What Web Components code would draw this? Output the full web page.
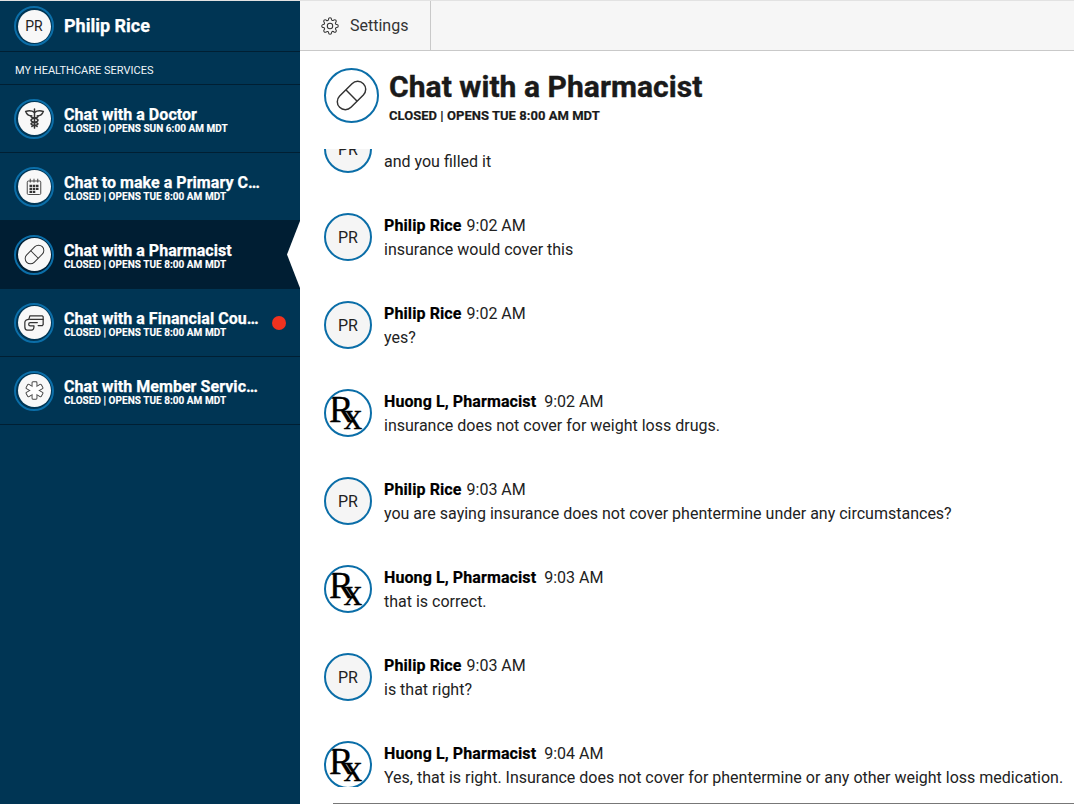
<!DOCTYPE html>
<html>
<head>
<meta charset="utf-8">
<title>Chat with a Pharmacist</title>
<style>
    html, body { margin: 0; padding: 0; height: 100%; overflow: hidden; }
    body { font-family: 'Roboto', 'Liberation Sans', sans-serif; color: #222; background: #fff; }
</style>
</head>
<body>
<care-app>
    <side-bar slot="side" name="Philip Rice">
        <service-item icon="doctor" status="CLOSED | OPENS SUN 6:00 AM MDT">Chat with a Doctor</service-item>
        <service-item icon="calendar" status="CLOSED | OPENS TUE 8:00 AM MDT">Chat to make a Primary Care Appointment</service-item>
        <service-item icon="pill" active status="CLOSED | OPENS TUE 8:00 AM MDT">Chat with a Pharmacist</service-item>
        <service-item icon="card" unread status="CLOSED | OPENS TUE 8:00 AM MDT">Chat with a Financial Counselor</service-item>
        <service-item icon="star" status="CLOSED | OPENS TUE 8:00 AM MDT">Chat with Member Services</service-item>
    </side-bar>
    <top-bar slot="main"></top-bar>
    <chat-header slot="main" status="CLOSED | OPENS TUE 8:00 AM MDT">Chat with a Pharmacist</chat-header>
    <chat-feed slot="main">
        <!-- scrolled past its header line -->
        <chat-message who="pr" style="margin-top:-24px">and you filled it</chat-message>
        <chat-message who="pr" time="9:02 AM">insurance would cover this</chat-message>
        <chat-message who="pr" time="9:02 AM">yes?</chat-message>
        <chat-message who="rx" time="9:02 AM">insurance does not cover for weight loss drugs.</chat-message>
        <chat-message who="pr" time="9:03 AM">you are saying insurance does not cover phentermine under any circumstances?</chat-message>
        <chat-message who="rx" time="9:03 AM">that is correct.</chat-message>
        <chat-message who="pr" time="9:03 AM">is that right?</chat-message>
        <chat-message who="rx" time="9:04 AM">Yes, that is right. Insurance does not cover for phentermine or any other weight loss medication.</chat-message>
    </chat-feed>
    <chat-footer slot="main"></chat-footer>
</care-app>

<script>
const icons = {
    doctor: `<svg width="21" height="21" viewBox="0 0 24 24" fill="none" stroke="#333" stroke-width="1.7" stroke-linecap="round">
        <path d="M12 1v22"/>
        <path d="M12 5c-3-2-7-2-10-1 1 3 4 5 7 5"/>
        <path d="M12 5c3-2 7-2 10-1-1 3-4 5-7 5"/>
        <path d="M8 9c-1 3 8 2 8 5s-8 2-8 4 6 2 7 3"/>
        <path d="M16 9c1 3-8 2-8 5s8 2 8 4-6 2-7 3"/>
    </svg>`,
    calendar: `<svg width="18" height="18" viewBox="0 0 24 24" fill="none" stroke="#444" stroke-width="1.3">
        <rect x="3" y="4" width="18" height="18" rx="1.5"/>
        <path d="M7 1.5v4M12 1.5v4M17 1.5v4" stroke-linecap="round"/>
        <g fill="#333" stroke="none">
            <rect x="6" y="9" width="3.4" height="3"/><rect x="10.3" y="9" width="3.4" height="3"/><rect x="14.6" y="9" width="3.4" height="3"/>
            <rect x="6" y="13" width="3.4" height="3"/><rect x="10.3" y="13" width="3.4" height="3"/><rect x="14.6" y="13" width="3.4" height="3"/>
            <rect x="6" y="17" width="3.4" height="3"/><rect x="10.3" y="17" width="3.4" height="3"/>
        </g>
    </svg>`,
    pill: `<svg width="23" height="23" viewBox="0 0 24 24" fill="none" stroke="#333" stroke-width="1">
        <g transform="rotate(-45 12 12)">
            <rect x="0.5" y="6.5" width="23" height="11" rx="5.5"/>
            <path d="M12 6.5v11"/>
        </g>
    </svg>`,
    card: `<svg width="20" height="20" viewBox="0 0 24 24" fill="none" stroke="#333" stroke-width="1.5" stroke-linejoin="round" stroke-linecap="round">
        <path d="M6 7l1-3.5h15l1 1v9.500l-1 1h-5"/>
        <path d="M7 7.500h16"/>
        <path d="M16 11.500H7.500c-2.500 0-2.500 4 0 4H12c0 3-1 5-3 5H4c-2 0-3-2-3-4v-5c0-2 2-4 5-4"/>
    </svg>`,
    star: `<svg width="19" height="19" viewBox="0 0 24 24">
        <g fill="#fff" stroke="#444" stroke-width="2.4" stroke-linejoin="round">
            <rect x="9.5" y="1.500" width="5" height="21" rx=".6"/>
            <rect x="9.5" y="1.500" width="5" height="21" rx=".6" transform="rotate(60 12 12)"/>
            <rect x="9.5" y="1.500" width="5" height="21" rx=".6" transform="rotate(120 12 12)"/>
        </g>
        <g fill="#fff">
            <rect x="9.5" y="1.500" width="5" height="21" rx=".6"/>
            <rect x="9.5" y="1.500" width="5" height="21" rx=".6" transform="rotate(60 12 12)"/>
            <rect x="9.5" y="1.500" width="5" height="21" rx=".6" transform="rotate(120 12 12)"/>
        </g>
    </svg>`
};

const GEAR = `M19.4 15a1.65 1.65 0 0 0 .33 1.82l.06.06a2 2 0 0 1 0 2.83 2 2 0 0 1-2.83 0l-.06-.06a1.65 1.65 0 0 0-1.82-.33 1.65 1.65 0 0 0-1 1.51V21a2 2 0 0 1-2 2 2 2 0 0 1-2-2v-.09A1.65 1.65 0 0 0 9 19.4a1.65 1.65 0 0 0-1.82.33l-.06.06a2 2 0 0 1-2.83 0 2 2 0 0 1 0-2.83l.06-.06a1.65 1.65 0 0 0 .33-1.82 1.65 1.65 0 0 0-1.51-1H3a2 2 0 0 1-2-2 2 2 0 0 1 2-2h.09A1.65 1.65 0 0 0 4.6 9a1.65 1.65 0 0 0-.33-1.82l-.06-.06a2 2 0 0 1 0-2.83 2 2 0 0 1 2.83 0l.06.06a1.65 1.65 0 0 0 1.82.33H9a1.65 1.65 0 0 0 1-1.51V3a2 2 0 0 1 2-2 2 2 0 0 1 2 2v.09a1.65 1.65 0 0 0 1 1.51 1.65 1.65 0 0 0 1.82-.33l.06-.06a2 2 0 0 1 2.83 0 2 2 0 0 1 0 2.83l-.06.06a1.65 1.65 0 0 0-.33 1.82V9a1.65 1.65 0 0 0 1.51 1H21a2 2 0 0 1 2 2 2 2 0 0 1-2 2h-.09a1.65 1.65 0 0 0-1.51 1z`;

class CareApp extends HTMLElement {
    constructor() {
        super();
        this.attachShadow({ mode: "open" }).innerHTML = `
            <style>
                :host { display: grid; grid-template-columns: 300px 1fr; height: 100vh; border-top: 1px solid #e2e2e2; box-sizing: border-box; overflow: hidden; }
                main { display: flex; flex-direction: column; min-width: 0; height: 100%; overflow: hidden; }
            </style>
            <slot name="side"></slot>
            <main><slot name="main"></slot></main>
        `;
    }
}

// round badge used in the sidebar rows
class SideBadge extends HTMLElement {
    constructor() {
        super();
        this.attachShadow({ mode: "open" }).innerHTML = `
            <style>
                :host { display: block; flex: none; width: 40px; height: 40px; box-sizing: border-box; border: 2.5px solid #0b6ea8; border-radius: 50%; padding: 1.5px; }
                div { width: 100%; height: 100%; border-radius: 50%; background: #f8f8f8; color: #222; font-size: 14px; font-weight: 400; -webkit-text-stroke: 0; display: flex; align-items: center; justify-content: center; }
            </style>
            <div><slot></slot></div>
        `;
    }
}

class SideBar extends HTMLElement {
    constructor() {
        super();
        this.attachShadow({ mode: "open" }).innerHTML = `
            <style>
                :host { display: block; background: #003554; color: #fff; height: 100%; }
                .me { display: flex; align-items: center; gap: 10px; height: 50px; padding-left: 14px; border-bottom: 1px solid #001f33; font-size: 18px; font-weight: 700; }
                .me span { margin-top: -2px; -webkit-text-stroke: .25px; }
                h2 { margin: 0; height: 32px; padding-left: 15px; line-height: 38px; font-size: 11px; font-weight: 400; border-bottom: 1px solid #001f33; color: #eef4f8; }
            </style>
            <div class="me"><side-badge>PR</side-badge><span id="name"></span></div>
            <h2>MY HEALTHCARE SERVICES</h2>
            <slot></slot>
        `;
        this.shadowRoot.querySelector("#name").textContent = this.getAttribute("name");
    }
}

class ServiceItem extends HTMLElement {
    constructor() {
        super();
        this.attachShadow({ mode: "open" }).innerHTML = `
            <style>
                :host { display: flex; align-items: center; gap: 10px; height: 67px; padding-left: 14px; border-bottom: 1px solid #001f33; position: relative; }
                :host([active]) { background: #001e33; }
                :host([active])::after { content: ""; position: absolute; right: 0; top: 0; bottom: 0; width: 13px; background: #fff; clip-path: polygon(100% 0, 0 50%, 100% 100%); }
                .text { width: 198px; min-width: 0; margin-top: 2px; }
                .title { font-size: 16px; font-weight: 700; line-height: 18px; letter-spacing: .05px; -webkit-text-stroke: .25px; white-space: nowrap; overflow: hidden; text-overflow: ellipsis; }
                .status { font-size: 10px; font-weight: 700; line-height: 10px; letter-spacing: .03px; -webkit-text-stroke: .15px; white-space: nowrap; }
                .dot { position: absolute; left: 272px; top: 27px; width: 14px; height: 14px; border-radius: 50%; background: #f0321f; }
            </style>
            <side-badge id="badge"></side-badge>
            <div class="text">
                <div class="title"><slot></slot></div>
                <div class="status"></div>
            </div>
        `;
        this.shadowRoot.querySelector("#badge").innerHTML = icons[this.getAttribute("icon")];
        this.shadowRoot.querySelector(".status").textContent = this.getAttribute("status");
        if (this.hasAttribute("unread")) {
            const dot = document.createElement("span");
            dot.className = "dot";
            this.shadowRoot.appendChild(dot);
        }
    }
}

class TopBar extends HTMLElement {
    constructor() {
        super();
        this.attachShadow({ mode: "open" }).innerHTML = `
            <style>
                :host { display: flex; flex: none; height: 49px; background: #f6f6f6; border-bottom: 1px solid #c9c9c9; }
                .tab { display: flex; align-items: center; gap: 11px; width: 131px; box-sizing: border-box; padding-left: 21px; border-right: 1px solid #c9c9c9; font-size: 16px; color: #333; }
                svg { width: 18px; height: 18px; fill: none; stroke: #333; stroke-width: 1.4; }
            </style>
            <div class="tab">
                <svg viewBox="0 0 24 24"><circle cx="12" cy="12" r="3.6"></circle><path d="${GEAR}"></path></svg>
                Settings
            </div>
        `;
    }
}

class ChatHeader extends HTMLElement {
    constructor() {
        super();
        this.attachShadow({ mode: "open" }).innerHTML = `
            <style>
                :host { display: flex; flex: none; align-items: flex-start; gap: 10px; height: 98px; padding: 17px 0 0 24px; box-sizing: border-box; background: #fff; color: #1a1a1a; }
                .ring { flex: none; width: 55px; height: 55px; box-sizing: border-box; border: 2px solid #0b6ea8; border-radius: 50%; display: flex; align-items: center; justify-content: center; }
                .ring svg { width: 35px; height: 35px; }
                .text { margin-top: 2px; }
                h1 { margin: 0; font-size: 30px; line-height: 34px; font-weight: 700; letter-spacing: .05px; -webkit-text-stroke: .4px; }
                .status { font-size: 13px; line-height: 16px; font-weight: 700; letter-spacing: .04px; -webkit-text-stroke: .2px; margin-top: 4px; }
            </style>
            <div class="ring">${icons.pill}</div>
            <div class="text">
                <h1><slot></slot></h1>
                <div class="status"></div>
            </div>
        `;
        this.shadowRoot.querySelector(".status").textContent = this.getAttribute("status");
    }
}

class ChatFeed extends HTMLElement {
    constructor() {
        super();
        this.attachShadow({ mode: "open" }).innerHTML = `
            <style>
                :host { display: block; flex: 1; min-height: 0; overflow: hidden; padding-left: 24px; }
            </style>
            <slot></slot>
        `;
    }
}

const people = {
    pr: { name: "Philip Rice", gap: "5px" },
    rx: { name: "Huong L, Pharmacist", gap: "8px" }
};

class ChatMessage extends HTMLElement {
    constructor() {
        super();
        const who = this.getAttribute("who");
        const person = people[who];
        const time = this.getAttribute("time");
        const face = who === "rx"
            ? `<span class="r">R</span><span class="x">x</span>`
            : `<span class="initials">PR</span>`;
        this.attachShadow({ mode: "open" }).innerHTML = `
            <style>
                :host { display: flex; gap: 12px; height: 48px; margin-bottom: 40px; font-size: 16px; line-height: 24px; color: #222; }
                .face { flex: none; width: 48px; height: 48px; box-sizing: border-box; border: 2px solid #0b6ea8; border-radius: 50%; background: #f5f5f5; display: flex; align-items: center; justify-content: center; overflow: hidden; }
                .initials { margin-top: 2px; }
                .face.rx { background: #fff; color: #000; font-family: 'Liberation Serif', serif; justify-content: flex-start; align-items: flex-start; padding-left: 3px; font-size: 37px; line-height: 36px; -webkit-text-stroke: .3px; }
                .r { margin-top: 1px; letter-spacing: -10px; }
                .x { margin-top: 8px; }
                .text { padding-top: 1px; }
                .head { height: 24px; white-space: nowrap; }
                b { color: #000; font-weight: 700; letter-spacing: .1px; -webkit-text-stroke: .2px; margin-right: ${person.gap}; }
                .body { white-space: nowrap; }
            </style>
            <div class="face ${who}">${face}</div>
            <div class="text">
                <div class="head">${time ? `<b>${person.name}</b><span>${time}</span>` : ""}</div>
                <div class="body"><slot></slot></div>
            </div>
        `;
    }
}

class ChatFooter extends HTMLElement {
    constructor() {
        super();
        this.attachShadow({ mode: "open" }).innerHTML = `
            <style>
                :host { display: block; flex: none; height: 17px; margin-left: 33px; box-sizing: border-box; border-bottom: 1px solid #777; }
            </style>
        `;
    }
}

customElements.define("care-app", CareApp);
customElements.define("side-badge", SideBadge);
customElements.define("side-bar", SideBar);
customElements.define("service-item", ServiceItem);
customElements.define("top-bar", TopBar);
customElements.define("chat-header", ChatHeader);
customElements.define("chat-feed", ChatFeed);
customElements.define("chat-message", ChatMessage);
customElements.define("chat-footer", ChatFooter);
</script>
</body>
</html>
